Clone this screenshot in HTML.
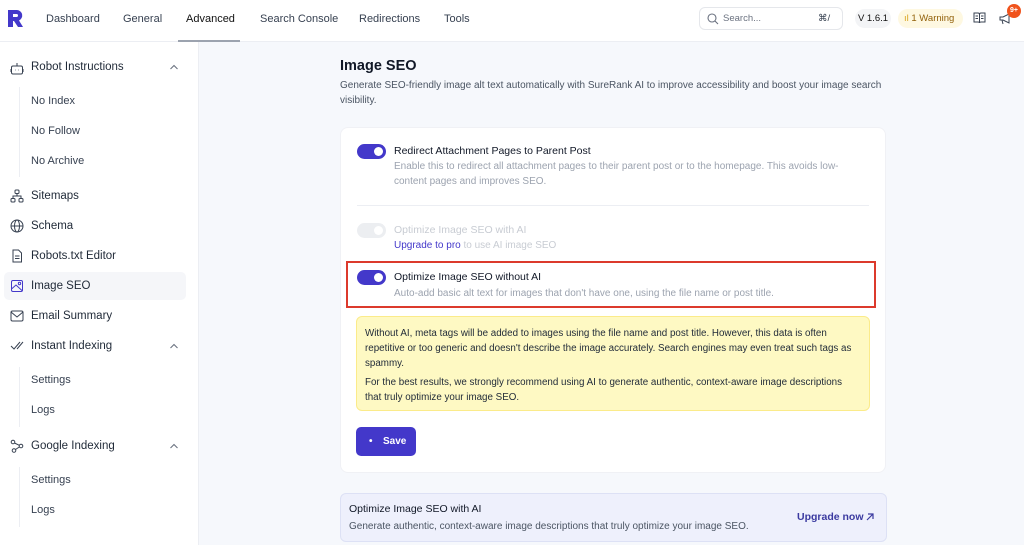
<!DOCTYPE html>
<html><head><meta charset="utf-8"><style>
*{box-sizing:border-box;margin:0;padding:0}
body{width:1024px;height:545px;overflow:hidden;font-family:"Liberation Sans",sans-serif;background:#f6f8fc;color:#111827;position:relative}
.hdr{position:absolute;left:0;top:0;width:1024px;height:42px;background:#fff;border-bottom:1px solid #eceef3}
.nav{position:absolute;top:13px;font-size:11px;color:#374151}
.side{position:absolute;left:0;top:42px;width:199px;height:503px;background:#fff;border-right:1px solid #eceef3}
.si{position:absolute;left:31px;font-size:11.5px;color:#1f2937}
.sub{position:absolute;left:31px;font-size:11px;color:#374151}
.ic{position:absolute;left:10px}
.chev{position:absolute;left:169px}
.vl{position:absolute;left:19px;width:1px;background:#eceef3}
.card{position:absolute;left:340px;top:127px;width:546px;height:346px;background:#fff;border-radius:8px;border:1px solid #f0f1f5}
.tg{position:absolute;width:29px;height:15px;border-radius:8px;background:#4338ca}
.tg::after{content:"";position:absolute;right:3px;top:3px;width:9px;height:9px;border-radius:50%;background:#fff}
.lbl{position:absolute;font-size:10.5px;color:#111827}
.desc{position:absolute;font-size:10px;color:#9ca3af;line-height:15px}
</style></head><body>
<div class="hdr">
<svg style="position:absolute;left:8px;top:10px" width="15" height="17" viewBox="0 0 15 17"><path d="M0 0H9A5.5 5.5 0 0 1 11 10.5L15 17H10L6 11H5V17H0Z M5 4V7H8.5A1.5 1.5 0 0 0 8.5 4Z" fill="#4338ca" fill-rule="evenodd"/></svg>
<div class="nav" style="left:46px">Dashboard</div>
<div class="nav" style="left:123px">General</div>
<div class="nav" style="left:186px;color:#111">Advanced</div>
<div style="position:absolute;left:178px;top:40px;width:62px;height:2px;background:#9ca3af"></div>
<div class="nav" style="left:260px">Search Console</div>
<div class="nav" style="left:359px">Redirections</div>
<div class="nav" style="left:444px">Tools</div>
<div style="position:absolute;left:699px;top:7px;width:144px;height:23px;border:1px solid #e5e7eb;border-radius:6px;background:#fff">
<svg style="position:absolute;left:7px;top:5px" width="12" height="12" viewBox="0 0 12 12"><circle cx="5" cy="5" r="4" fill="none" stroke="#6b7280" stroke-width="1.1"/><path d="M8 8L11 11" stroke="#6b7280" stroke-width="1.1"/></svg>
<span style="position:absolute;left:23px;top:5px;font-size:9.5px;color:#6b7280">Search...</span>
<span style="position:absolute;left:118px;top:5px;font-size:9.5px;color:#374151">⌘/</span></div>
<div style="position:absolute;left:855px;top:9px;width:36px;height:19px;border-radius:10px;background:#f3f4f6;font-size:9.5px;color:#111;text-align:center;line-height:19px">V 1.6.1</div>
<div style="position:absolute;left:898px;top:9px;width:65px;height:19px;border-radius:10px;background:#fef8e1;font-size:9.5px;color:#92610a;line-height:19px;padding-left:6px"><span style="color:#d9a520">ıl</span> 1 Warning</div>
<svg style="position:absolute;left:973px;top:12px" width="13" height="12" viewBox="0 0 13 12"><path d="M1 1H5Q6.5 1 6.5 2.5V11Q6.5 10 5 10H1ZM12 1H8Q6.5 1 6.5 2.5V11Q6.5 10 8 10H12Z M2.5 4H5M2.5 6.5H5M8 4H10.5M8 6.5H10.5" fill="none" stroke="#374151" stroke-width="1"/></svg>
<svg style="position:absolute;left:999px;top:13px" width="13" height="12" viewBox="0 0 13 12"><path d="M1 4H4L10 1V10L4 7H1Z M3 7L4 11" fill="none" stroke="#374151" stroke-width="1"/></svg>
<div style="position:absolute;left:1007px;top:4px;width:14px;height:14px;border-radius:50%;background:#f0531c;color:#fff;font-size:7px;font-weight:bold;text-align:center;line-height:14px">9+</div>
</div>

<div class="side">
<svg class="ic" style="top:20px" width="14" height="13" viewBox="0 0 14 13"><rect x="1.5" y="4" width="11" height="8" rx="1.5" fill="none" stroke="#374151"/><path d="M7 1V4M5 8H5.5M8.5 8H9M0 7V10M14 7V10" stroke="#374151"/></svg>
<div class="si" style="top:19px">Robot Instructions</div>
<svg class="chev" style="top:22px" width="10" height="6" viewBox="0 0 10 6"><path d="M1.5 5L5 1.5L8.5 5" fill="none" stroke="#6b7280" stroke-width="1.1"/></svg>
<div class="vl" style="top:45px;height:90px"></div>
<div class="sub" style="top:53px">No Index</div>
<div class="sub" style="top:83px">No Follow</div>
<div class="sub" style="top:113px">No Archive</div>
<svg class="ic" style="top:147px" width="14" height="14" viewBox="0 0 14 14"><rect x="5" y="1" width="4" height="3.5" rx="1" fill="none" stroke="#374151"/><rect x="1" y="9.5" width="4" height="3.5" rx="1" fill="none" stroke="#374151"/><rect x="9" y="9.5" width="4" height="3.5" rx="1" fill="none" stroke="#374151"/><path d="M7 4.5V7M3 9.5V7H11V9.5" fill="none" stroke="#374151"/></svg>
<div class="si" style="top:148px">Sitemaps</div>
<svg class="ic" style="top:177px" width="14" height="14" viewBox="0 0 14 14"><circle cx="7" cy="7" r="6" fill="none" stroke="#374151"/><ellipse cx="7" cy="7" rx="2.5" ry="6" fill="none" stroke="#374151"/><path d="M1 7H13" stroke="#374151"/></svg>
<div class="si" style="top:178px">Schema</div>
<svg class="ic" style="top:207px" width="14" height="14" viewBox="0 0 14 14"><path d="M3 1H8.5L11.5 4V13H3Z M5 7H9.5M5 9.5H9.5" fill="none" stroke="#374151"/></svg>
<div class="si" style="top:208px">Robots.txt Editor</div>
<div style="position:absolute;left:4px;top:230px;width:182px;height:28px;background:#f5f6f9;border-radius:5px"></div>
<svg class="ic" style="top:237px" width="14" height="14" viewBox="0 0 14 14"><rect x="1.5" y="1.5" width="11" height="11" rx="1.5" fill="none" stroke="#4338ca"/><path d="M1.5 10L6 6L12.5 12" fill="none" stroke="#4338ca"/><circle cx="9.5" cy="4.5" r="1.2" fill="none" stroke="#4338ca"/></svg>
<div class="si" style="top:238px">Image SEO</div>
<svg class="ic" style="top:268px" width="14" height="12" viewBox="0 0 14 12"><rect x="1" y="1" width="12" height="10" rx="1.5" fill="none" stroke="#374151"/><path d="M1 2L7 7L13 2" fill="none" stroke="#374151"/></svg>
<div class="si" style="top:268px">Email Summary</div>
<svg class="ic" style="top:299px" width="14" height="10" viewBox="0 0 14 10"><path d="M1 5L4 8L10 1M7 8L13 1" fill="none" stroke="#374151"/></svg>
<div class="si" style="top:298px">Instant Indexing</div>
<svg class="chev" style="top:301px" width="10" height="6" viewBox="0 0 10 6"><path d="M1.5 5L5 1.5L8.5 5" fill="none" stroke="#6b7280" stroke-width="1.1"/></svg>
<div class="vl" style="top:325px;height:60px"></div>
<div class="sub" style="top:332px">Settings</div>
<div class="sub" style="top:362px">Logs</div>
<svg class="ic" style="top:397px" width="14" height="14" viewBox="0 0 14 14"><circle cx="3" cy="3" r="1.8" fill="none" stroke="#374151"/><circle cx="11" cy="7" r="1.8" fill="none" stroke="#374151"/><circle cx="4" cy="11.5" r="1.8" fill="none" stroke="#374151"/><path d="M4.5 4L9.3 6.3M9.3 8L5.5 10.5" stroke="#374151"/></svg>
<div class="si" style="top:398px">Google Indexing</div>
<svg class="chev" style="top:401px" width="10" height="6" viewBox="0 0 10 6"><path d="M1.5 5L5 1.5L8.5 5" fill="none" stroke="#6b7280" stroke-width="1.1"/></svg>
<div class="vl" style="top:425px;height:60px"></div>
<div class="sub" style="top:432px">Settings</div>
<div class="sub" style="top:462px">Logs</div>
</div>

<div style="position:absolute;left:340px;top:58px;font-size:14.5px;font-weight:bold;color:#111827">Image SEO</div>
<div style="position:absolute;left:340px;top:79px;width:550px;font-size:10px;color:#4b5563;line-height:14.5px">Generate SEO-friendly image alt text automatically with SureRank AI to improve accessibility and boost your image search visibility.</div>

<div class="card"></div>
<div class="tg" style="left:357px;top:144px"></div>
<div class="lbl" style="left:394px;top:145px">Redirect Attachment Pages to Parent Post</div>
<div class="desc" style="left:394px;top:159px;width:470px">Enable this to redirect all attachment pages to their parent post or to the homepage. This avoids low-content pages and improves SEO.</div>
<div style="position:absolute;left:357px;top:205px;width:512px;height:1px;background:#eceef3"></div>
<div class="tg" style="left:357px;top:223px;background:#eceef1"></div>
<div class="lbl" style="left:394px;top:224px;color:#c8ccd3">Optimize Image SEO with AI</div>
<div class="desc" style="left:394px;top:238px;color:#c8ccd3"><span style="color:#4338ca">Upgrade to pro</span> to use AI image SEO</div>
<div style="position:absolute;left:346px;top:261px;width:530px;height:47px;border:2px solid #dc3a2c"></div>
<div class="tg" style="left:357px;top:270px"></div>
<div class="lbl" style="left:394px;top:271px">Optimize Image SEO without AI</div>
<div class="desc" style="left:394px;top:286px">Auto-add basic alt text for images that don't have one, using the file name or post title.</div>
<div style="position:absolute;left:356px;top:316px;width:514px;height:95px;background:#fef9c3;border:1px solid #fbeb8a;border-radius:6px;padding:9px 8px;font-size:9.8px;color:#1f2937;line-height:15px">
<p>Without AI, meta tags will be added to images using the file name and post title. However, this data is often repetitive or too generic and doesn't describe the image accurately. Search engines may even treat such tags as spammy.</p>
<p style="margin-top:4px">For the best results, we strongly recommend using AI to generate authentic, context-aware image descriptions that truly optimize your image SEO.</p></div>
<div style="position:absolute;left:356px;top:427px;width:60px;height:29px;background:#4338ca;border-radius:5px;color:#fff;font-size:10px;font-weight:bold;line-height:29px"><span style="position:absolute;left:13px;top:0px">•</span><span style="position:absolute;left:27px">Save</span></div>

<div style="position:absolute;left:340px;top:493px;width:547px;height:49px;background:#eef0fc;border:1px solid #dde1f5;border-radius:6px"></div>
<div style="position:absolute;left:349px;top:503px;font-size:10.5px;color:#111827">Optimize Image SEO with AI</div>
<div style="position:absolute;left:349px;top:521px;font-size:10px;color:#4b5563">Generate authentic, context-aware image descriptions that truly optimize your image SEO.</div>
<div style="position:absolute;left:797px;top:511px;font-size:10.5px;font-weight:bold;color:#3b3aa0">Upgrade now</div>
<svg style="position:absolute;left:865px;top:512px" width="10" height="10" viewBox="0 0 10 10"><path d="M2 8L8 2M3 2H8V7" fill="none" stroke="#3b3aa0" stroke-width="1.2"/></svg>
</body></html>
